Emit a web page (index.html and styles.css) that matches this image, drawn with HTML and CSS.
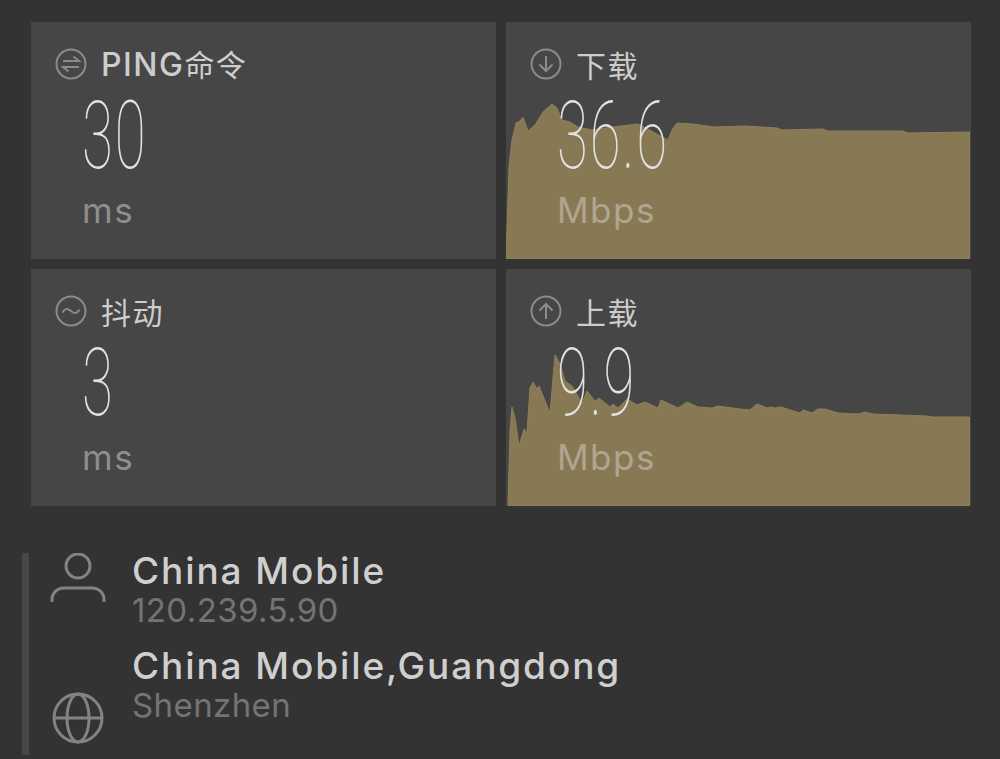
FILE: index.html
```html
<!DOCTYPE html>
<html lang="zh">
<head>
<meta charset="utf-8">
<title>Speed test</title>
<link rel="stylesheet" href="styles.css">
</head>
<body>
<main class="page">
  <section class="grid">
    <article class="card">
      <header class="head">
        <svg class="ic" viewBox="0 0 32 32"><circle cx="16" cy="16" r="14.5"/><path d="M8 13H24L18.500 8.500M24 19H8L13.500 23.500"/></svg>
        <h2 class="label"><span class="latin">PING</span>命令</h2>
      </header>
      <div class="num"><span class="digits">30</span></div>
      <div class="unit">ms</div>
    </article>
    <article class="card">
      <svg class="chart" viewBox="0 0 466 237" preserveAspectRatio="none"><path d="M0 237V236L3 145L6 118L10 101L14 99L17 95L22 109L29 103L37 90L46 82L51 86L56 98L64 100L72 105L86 108L106 105L132 102L142 107L156 115L162 118L166 108L171 101L186 102L209 105L239 104L271 106L276 108L317 107L322 109L397 109L402 111L463.500 110V236.500H0Z"/></svg>
      <header class="head">
        <svg class="ic" viewBox="0 0 32 32"><circle cx="16" cy="16" r="14.5"/><path d="M16 8V23M9.500 16.500L16 23L22.500 16.500"/></svg>
        <h2 class="label">下载</h2>
      </header>
      <div class="num"><span class="digits">36.6</span></div>
      <div class="unit on-chart">Mbps</div>
    </article>
    <article class="card">
      <header class="head">
        <svg class="ic" viewBox="0 0 32 32"><circle cx="16" cy="16" r="14.500"/><path d="M7.500 17.500C10 13 12.500 13 16 16C19.500 19 22 19 24.500 14.500"/></svg>
        <h2 class="label">抖动</h2>
      </header>
      <div class="num"><span class="digits">3</span></div>
      <div class="unit">ms</div>
    </article>
    <article class="card">
      <svg class="chart" viewBox="0 0 466 237" preserveAspectRatio="none"><path d="M2 236.500L4 162L6 138L9 149L13 177L18 160L21 164L24 119L27 113L31 120L33 117L44 144L49 86L54 95L59 112L66 117L76 134L81 122L89 132L93 129L104 138L107 135L112 139L121 130L131 136L139 133L152 139L155 131L172 139L181 133L192 138L206 139L212 137L234 140L244 141L251 135L261 139L266 138L269 139L275 138L294 144L297 141L306 144L312 140L319 140L332 144L352 145L359 143L367 145L421 147L426 148L463.500 148V236.500Z"/></svg>
      <header class="head">
        <svg class="ic" viewBox="0 0 32 32"><circle cx="16" cy="16" r="14.500"/><path d="M16 24V9M9.500 15.500L16 9L22.500 15.500"/></svg>
        <h2 class="label">上载</h2>
      </header>
      <div class="num"><span class="digits">9.9</span></div>
      <div class="unit on-chart">Mbps</div>
    </article>
  </section>
  <section class="info">
    <div class="icons">
      <svg class="big" viewBox="0 0 56 56"><circle cx="28" cy="13" r="12"/><path d="M2 49V47C2 40 7 35 14 35H42C49 35 54 40 54 47V49"/></svg>
      <svg class="big" viewBox="0 0 56 56"><circle cx="28" cy="28" r="24"/><ellipse cx="28" cy="28" rx="11" ry="24"/><path d="M4 28H52"/></svg>
    </div>
    <div class="texts">
      <div class="entry"><h3 class="name">China Mobile</h3><p class="sub">120.239.5.90</p></div>
      <div class="entry"><h3 class="name">China Mobile,Guangdong</h3><p class="sub">Shenzhen</p></div>
    </div>
  </section>
</main>
</body>
</html>
```
FILE: styles.css
```css
* { box-sizing: border-box; }
html, body { margin: 0; height: 100%; }
body {
  background: #333333;
  font-family: "Inter", "Noto Sans CJK SC", sans-serif;
  overflow: hidden;
}
.page { padding: 22px 29px 0 22px; }
.grid {
  display: grid;
  grid-template-columns: 465px 465px;
  grid-template-rows: 237px 237px;
  gap: 10px;
  margin-left: 9px;
}
.card {
  position: relative;
  background: #464646;
  overflow: hidden;
  padding: 26px 0 0 24px;
}
.chart {
  position: absolute;
  left: 0;
  top: 0;
  width: 466px;
  height: 237px;
}
.chart path { fill: #887955; stroke: #8f7f59; stroke-width: 1; }
.head {
  position: relative;
  display: flex;
  align-items: center;
  gap: 14px;
  height: 32px;
}
.ic { width: 32px; height: 32px; flex: none; fill: none; stroke: #8b8b8b; stroke-width: 2; }
.label {
  margin: 0;
  font-size: 30px;
  line-height: 32px;
  font-weight: 400;
  letter-spacing: 1.500px;
  color: #cdcdcd;
  font-family: "Noto Sans CJK SC", sans-serif;
}
.latin {
  font-family: "Inter", sans-serif;
  font-size: 32px;
  font-weight: 500;
  letter-spacing: 1.500px;
}
.num {
  position: relative;
  margin: 14px 0 0 27px;
  height: 84px;
  line-height: 84px;
  font-family: "Roboto", sans-serif;
  font-size: 94px;
  font-weight: 150;
  letter-spacing: 3px;
  color: #e2e2e2;
}
.digits { display: inline-block; transform: scaleX(0.6); transform-origin: left center; }
.unit {
  position: relative;
  margin: 12px 0 0 27px;
  font-size: 35px;
  line-height: 40px;
  letter-spacing: 1.500px;
  color: #8e8e8e;
  font-family: "Inter", sans-serif;
}
.on-chart { color: #b0a590; }
.info {
  display: flex;
  margin-top: 47px;
  height: 202px;
  border-left: 7px solid #484848;
}
.icons {
  width: 103px;
  padding-left: 21px;
  padding-bottom: 9px;
  display: flex;
  flex-direction: column;
  justify-content: space-between;
}
.big { width: 56px; height: 56px; fill: none; stroke: #838383; stroke-width: 3; }
.texts { display: flex; flex-direction: column; gap: 17px; margin-top: -2px; }
.name {
  margin: 0;
  font-size: 37px;
  line-height: 40px;
  font-weight: 500;
  letter-spacing: 1.900px;
  color: #cfcfcf;
}
.sub {
  margin: 0;
  font-size: 33px;
  line-height: 38px;
  font-weight: 400;
  letter-spacing: 0.400px;
  color: #747474;
}
```
